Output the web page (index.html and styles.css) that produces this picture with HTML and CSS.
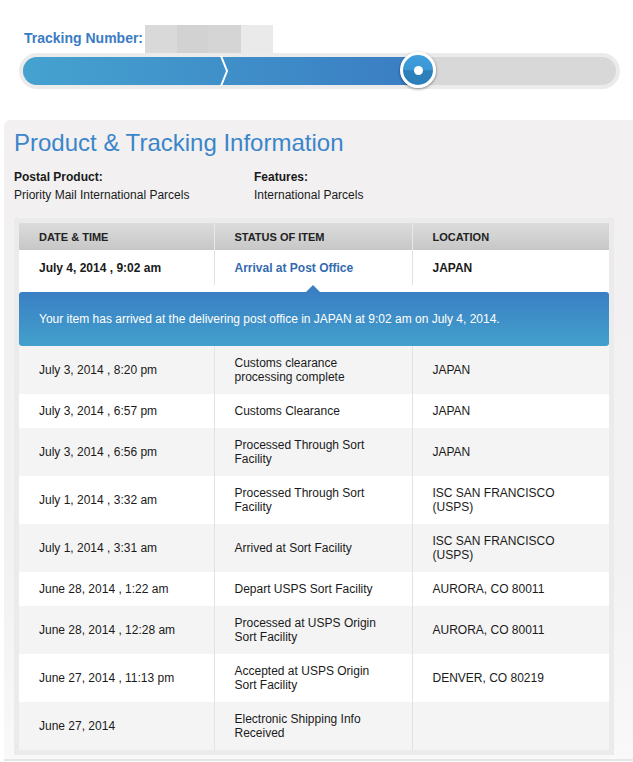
FILE: index.html
```html
<!DOCTYPE html>
<html lang="en">
<head>
<meta charset="utf-8">
<title>Tracking</title>
<link rel="stylesheet" href="styles.css">
</head>
<body>
<div class="tracking-head">
  <span class="tracking-label">Tracking Number:</span>
  <span class="tracking-mask">
    <span class="mask m1"></span><span class="mask m2"></span><span class="mask m3"></span><span class="mask m4"></span>
  </span>
</div>
<div class="progress">
  <div class="progress-fill">
    <svg class="chevron" width="12" height="30" viewBox="0 0 12 30"><polyline points="1,0 7,15 1,30" fill="none" stroke="#fff" stroke-width="2"/></svg>
  </div>
  <div class="knob"><span class="knob-dot"></span></div>
</div>

<section class="panel">
  <h1 class="panel-title">Product &amp; Tracking Information</h1>
  <div class="product-info">
    <div class="info-col">
      <div class="info-label">Postal Product:</div>
      <div class="info-value">Priority Mail International Parcels</div>
    </div>
    <div class="info-col">
      <div class="info-label">Features:</div>
      <div class="info-value">International Parcels</div>
    </div>
  </div>

  <div class="table-wrap">
    <table class="track-table">
      <colgroup><col class="c1"><col class="c2"><col class="c3"></colgroup>
      <thead>
        <tr><th>DATE &amp; TIME</th><th>STATUS OF ITEM</th><th>LOCATION</th></tr>
      </thead>
      <tbody>
        <tr class="latest"><td>July 4, 2014 , 9:02 am</td><td class="status-link">Arrival at Post Office</td><td>JAPAN</td></tr>
        <tr class="callout-row"><td colspan="3"><div class="callout">Your item has arrived at the delivering post office in JAPAN at 9:02 am on July 4, 2014.</div></td></tr>
        <tr class="alt"><td>July 3, 2014 , 8:20 pm</td><td><span class="wrap">Customs clearance processing complete</span></td><td>JAPAN</td></tr>
        <tr><td>July 3, 2014 , 6:57 pm</td><td>Customs Clearance</td><td>JAPAN</td></tr>
        <tr class="alt"><td>July 3, 2014 , 6:56 pm</td><td><span class="wrap">Processed Through Sort Facility</span></td><td>JAPAN</td></tr>
        <tr><td>July 1, 2014 , 3:32 am</td><td><span class="wrap">Processed Through Sort Facility</span></td><td><span class="loc-wrap">ISC SAN FRANCISCO (USPS)</span></td></tr>
        <tr class="alt"><td>July 1, 2014 , 3:31 am</td><td>Arrived at Sort Facility</td><td><span class="loc-wrap">ISC SAN FRANCISCO (USPS)</span></td></tr>
        <tr><td>June 28, 2014 , 1:22 am</td><td>Depart USPS Sort Facility</td><td>AURORA, CO 80011</td></tr>
        <tr class="alt"><td>June 28, 2014 , 12:28 am</td><td><span class="wrap">Processed at USPS Origin Sort Facility</span></td><td>AURORA, CO 80011</td></tr>
        <tr><td>June 27, 2014 , 11:13 pm</td><td><span class="wrap">Accepted at USPS Origin Sort Facility</span></td><td>DENVER, CO 80219</td></tr>
        <tr class="alt"><td>June 27, 2014</td><td><span class="wrap">Electronic Shipping Info Received</span></td><td></td></tr>
      </tbody>
    </table>
  </div>
</section>
</body>
</html>
```
FILE: styles.css
```css
html, body {
  margin: 0;
  padding: 0;
  background: #fff;
  font-family: "Liberation Sans", Arial, sans-serif;
  color: #1a1a1a;
}

.tracking-head {
  display: flex;
  align-items: flex-start;
  padding-left: 24px;
  padding-top: 25px;
  height: 28px;
}
.tracking-label {
  font-size: 14px;
  font-weight: bold;
  color: #3a7bc4;
  margin-top: 5px;
  margin-right: 2px;
}
.tracking-mask {
  display: flex;
  height: 32px;
}
.mask { display: block; height: 32px; }
.m1 { width: 32px; background: #d9d9d9; }
.m2 { width: 31px; background: #d2d2d2; }
.m3 { width: 33px; background: #d5d5d5; }
.m4 { width: 32px; background: #eaeaea; }

.progress {
  position: relative;
  margin-left: 19px;
  width: 601px;
  height: 36px;
  box-sizing: border-box;
  border: 4px solid #ebebeb;
  border-radius: 18px;
  background: #d8d8d8;
}
.progress-fill {
  position: relative;
  height: 100%;
  width: 400px;
  border-radius: 14px 0 0 14px;
  background: linear-gradient(to right, #45a2cf, #3a7dc3);
}
.chevron {
  position: absolute;
  left: 197px;
  top: -1px;
}
.knob {
  position: absolute;
  left: 377px;
  top: -5px;
  width: 36px;
  height: 36px;
  box-sizing: border-box;
  border-radius: 50%;
  border: 3px solid #fff;
  background: linear-gradient(to bottom, #3f9edb 0%, #3a97d6 50%, #2e80bb 52%, #2d7fb9 100%);
  box-shadow: 0 1px 3px rgba(0,0,0,0.45);
  display: flex;
  align-items: center;
  justify-content: center;
}
.knob-dot {
  width: 9px;
  height: 9px;
  border-radius: 50%;
  background: #fff;
}

.panel {
  margin-top: 31px;
  margin-left: 4px;
  padding: 8px 10px 4px 10px;
  border-top-left-radius: 6px;
  background: linear-gradient(to bottom, #f2f0f1 0%, #f3f2f3 70%, #f9f9f9 100%);
  border-bottom: 2px solid #e6e6e6;
}
.panel-title {
  margin: 0;
  font-weight: normal;
  font-size: 24px;
  line-height: 30px;
  color: #3b85ca;
}
.product-info {
  display: grid;
  grid-template-columns: 240px 1fr;
  margin-top: 10px;
  font-size: 12px;
  line-height: 18px;
}
.info-label { font-weight: bold; }

.table-wrap {
  margin-top: 14px;
  width: 600px;
  box-sizing: border-box;
  padding: 5px;
  background: #ebebeb;
}
.track-table {
  width: 590px;
  border-collapse: collapse;
  table-layout: fixed;
  background: #fff;
  font-size: 12px;
  line-height: 14px;
}
.c1 { width: 195px; }
.c2 { width: 198px; }
.c3 { width: 197px; }

.track-table th {
  height: 27px;
  padding: 0 0 0 20px;
  text-align: left;
  font-size: 11px;
  font-weight: bold;
  color: #222;
  background: linear-gradient(to bottom, #dcdcdc, #c7c7c7);
  border-left: 1px solid #e8e8e8;
}
.track-table th:first-child { border-left: none; }
.track-table td {
  padding: 10px 8px 10px 20px;
  vertical-align: middle;
  border-left: 1px solid #e2e2e2;
}
.track-table td:first-child { border-left: none; }
.track-table tr.alt td { background: #f4f4f4; }

.latest td {
  font-weight: bold;
  height: 15px;
  padding-top: 10px;
  padding-bottom: 10px;
}
.status-link { color: #336ab0; }
.wrap { display: block; max-width: 148px; }
.loc-wrap { display: block; max-width: 134px; }

.callout-row td {
  padding: 7px 0 0 0;
  border-left: none;
}
.callout {
  position: relative;
  height: 54px;
  box-sizing: border-box;
  padding: 20px 20px 0 20px;
  border-radius: 3px;
  color: #fff;
  background: linear-gradient(to bottom, #3a7fc4, #43a0cc);
}
.callout::before {
  content: "";
  position: absolute;
  left: 287px;
  top: -7px;
  border-left: 7px solid transparent;
  border-right: 7px solid transparent;
  border-bottom: 7px solid #3a7fc4;
}
```
